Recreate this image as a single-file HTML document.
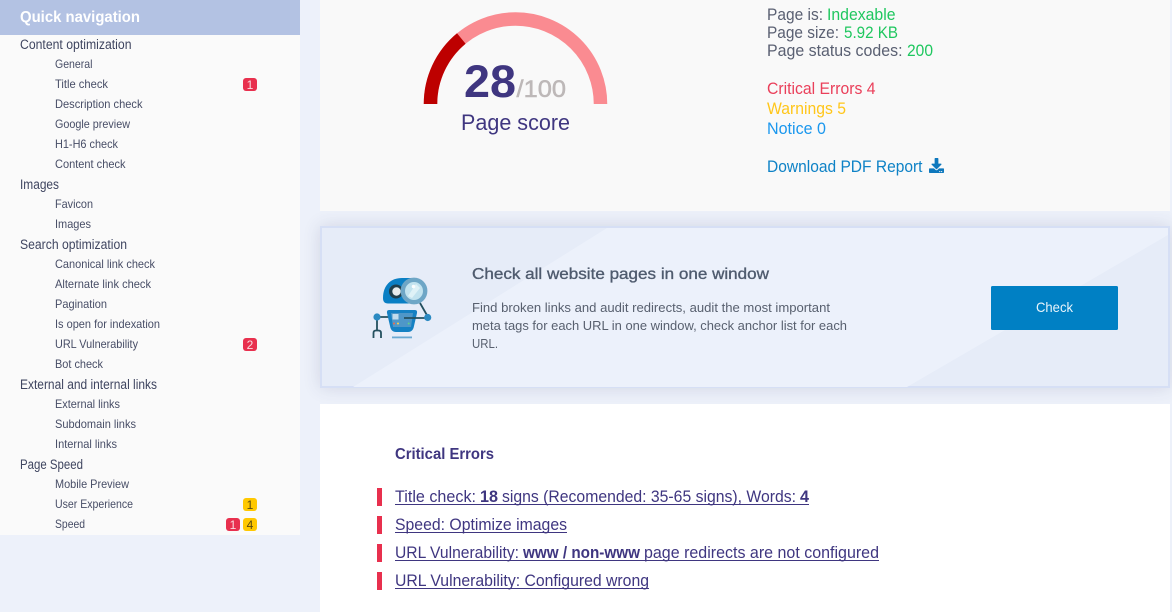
<!DOCTYPE html>
<html lang="en"><head><meta charset="utf-8"><title>Page score</title>
<style>
html,body{margin:0;padding:0;width:1172px;height:612px;overflow:hidden;background:#edf1fa}
.b{position:absolute}
svg{position:absolute;left:0;top:0;font-family:"Liberation Sans",sans-serif}
.g{font-size:13.5px;fill:#3f4560}
.s{font-size:12px;fill:#474d66}
.n{font-size:12px;text-anchor:middle}
.r{font-size:16.5px}
.l{font-size:16.5px;fill:#3f3680}
</style></head><body>
<div class="b" style="left:0;top:35px;width:300px;height:500px;background:#fafafa"></div>
<div class="b" style="left:0;top:0;width:300px;height:35px;background:#b3c2e3"></div>
<div class="b" style="left:320px;top:226px;width:846px;height:158px;border:2px solid #d6dff5;background:#e6ecf8;box-shadow:0 0 16px rgba(60,70,110,.16)"></div>
<div class="b" style="left:320px;top:0;width:850px;height:211px;background:#f9f9f9"></div>
<div class="b" style="left:320px;top:404px;width:850px;height:208px;background:#fff"></div>
<svg width="1172" height="612" viewBox="0 0 1172 612" xmlns="http://www.w3.org/2000/svg">
<polygon points="607,228 1168,228 1168,235 907,387 353,387" fill="#ecf1fb"/>
<!-- sidebar -->
<text x="20" y="22" font-size="16" font-weight="700" fill="#ffffff" textLength="120" lengthAdjust="spacingAndGlyphs">Quick navigation</text>
<text class="g" x="20" y="49" textLength="111.5" lengthAdjust="spacingAndGlyphs">Content optimization</text>
<text class="s" x="55" y="68" textLength="37.5" lengthAdjust="spacingAndGlyphs">General</text>
<text class="s" x="55" y="88" textLength="53" lengthAdjust="spacingAndGlyphs">Title check</text>
<text class="s" x="55" y="108" textLength="87.5" lengthAdjust="spacingAndGlyphs">Description check</text>
<text class="s" x="55" y="128" textLength="75" lengthAdjust="spacingAndGlyphs">Google preview</text>
<text class="s" x="55" y="148" textLength="63" lengthAdjust="spacingAndGlyphs">H1-H6 check</text>
<text class="s" x="55" y="168" textLength="70.5" lengthAdjust="spacingAndGlyphs">Content check</text>
<text class="g" x="20" y="189" textLength="39" lengthAdjust="spacingAndGlyphs">Images</text>
<text class="s" x="55" y="208" textLength="38" lengthAdjust="spacingAndGlyphs">Favicon</text>
<text class="s" x="55" y="228" textLength="36" lengthAdjust="spacingAndGlyphs">Images</text>
<text class="g" x="20" y="249" textLength="107" lengthAdjust="spacingAndGlyphs">Search optimization</text>
<text class="s" x="55" y="268" textLength="100" lengthAdjust="spacingAndGlyphs">Canonical link check</text>
<text class="s" x="55" y="288" textLength="96" lengthAdjust="spacingAndGlyphs">Alternate link check</text>
<text class="s" x="55" y="308" textLength="52" lengthAdjust="spacingAndGlyphs">Pagination</text>
<text class="s" x="55" y="328" textLength="105" lengthAdjust="spacingAndGlyphs">Is open for indexation</text>
<text class="s" x="55" y="348" textLength="83" lengthAdjust="spacingAndGlyphs">URL Vulnerability</text>
<text class="s" x="55" y="368" textLength="48" lengthAdjust="spacingAndGlyphs">Bot check</text>
<text class="g" x="20" y="389" textLength="137" lengthAdjust="spacingAndGlyphs">External and internal links</text>
<text class="s" x="55" y="408" textLength="65" lengthAdjust="spacingAndGlyphs">External links</text>
<text class="s" x="55" y="428" textLength="81" lengthAdjust="spacingAndGlyphs">Subdomain links</text>
<text class="s" x="55" y="448" textLength="62" lengthAdjust="spacingAndGlyphs">Internal links</text>
<text class="g" x="20" y="469" textLength="63" lengthAdjust="spacingAndGlyphs">Page Speed</text>
<text class="s" x="55" y="488" textLength="74" lengthAdjust="spacingAndGlyphs">Mobile Preview</text>
<text class="s" x="55" y="508" textLength="78" lengthAdjust="spacingAndGlyphs">User Experience</text>
<text class="s" x="55" y="528" textLength="30" lengthAdjust="spacingAndGlyphs">Speed</text>
<!-- badges -->
<rect x="243" y="78" width="14" height="13" rx="3" fill="#e8304e"/><text class="n" x="250" y="89" fill="#f9dbe0">1</text>
<rect x="243" y="338" width="14" height="13" rx="3" fill="#e8304e"/><text class="n" x="250" y="349" fill="#f9dbe0">2</text>
<rect x="243" y="498" width="14" height="13" rx="3" fill="#ffc800"/><text class="n" x="250" y="509" fill="#5b4a10">1</text>
<rect x="226" y="518" width="14" height="13" rx="3" fill="#e8304e"/><text class="n" x="233" y="529" fill="#f9dbe0">1</text>
<rect x="243" y="518" width="14" height="13" rx="3" fill="#ffc800"/><text class="n" x="250" y="529" fill="#5b4a10">4</text>
<!-- gauge -->
<path d="M430.500 104A85 85 0 0 1 600.500 104" fill="none" stroke="#fa8b91" stroke-width="13.500"/>
<path d="M430.500 104A85 85 0 0 1 461.300 38.500" fill="none" stroke="#bd0000" stroke-width="13.500"/>
<text x="464" y="97" font-size="45" font-weight="700" fill="#3f3680" textLength="52" lengthAdjust="spacingAndGlyphs">28</text>
<text x="516.500" y="97" font-size="24" fill="#bdb8b8" stroke="#bdb8b8" stroke-width=".5" textLength="49.500" lengthAdjust="spacingAndGlyphs">/100</text>
<text x="461" y="130" font-size="22.500" fill="#3f3680" textLength="109" lengthAdjust="spacingAndGlyphs">Page score</text>
<!-- status -->
<text class="r" x="767" y="20" fill="#5a6072" textLength="56" lengthAdjust="spacingAndGlyphs">Page is:</text>
<text class="r" x="827" y="20" fill="#1fc75f" textLength="68.500" lengthAdjust="spacingAndGlyphs">Indexable</text>
<text class="r" x="767" y="38" fill="#5a6072" textLength="72" lengthAdjust="spacingAndGlyphs">Page size:</text>
<text class="r" x="844" y="38" fill="#1fc75f" textLength="54" lengthAdjust="spacingAndGlyphs">5.92 KB</text>
<text class="r" x="767" y="56" fill="#5a6072" textLength="135.500" lengthAdjust="spacingAndGlyphs">Page status codes:</text>
<text class="r" x="907" y="56" fill="#1fc75f" textLength="26" lengthAdjust="spacingAndGlyphs">200</text>
<text class="r" x="767" y="94" fill="#ea3f5a" textLength="108.500" lengthAdjust="spacingAndGlyphs">Critical Errors 4</text>
<text class="r" x="767" y="114" fill="#ffc61a" textLength="79" lengthAdjust="spacingAndGlyphs">Warnings 5</text>
<text class="r" x="767" y="134" fill="#1a97ee" textLength="59" lengthAdjust="spacingAndGlyphs">Notice 0</text>
<text class="r" x="767" y="172" fill="#0e82c6" textLength="155.500" lengthAdjust="spacingAndGlyphs">Download PDF Report</text>
<g transform="translate(929 158) scale(.0293)"><path fill="#0e78bd" d="M216 0h80c13.300 0 24 10.700 24 24v168h87.700c17.800 0 26.700 21.500 14.100 34.100L269.700 378.300c-7.500 7.500-19.800 7.500-27.300 0L90.100 226.100c-12.600-12.600-3.700-34.100 14.100-34.100H192V24c0-13.300 10.700-24 24-24zm296 376v112c0 13.300-10.700 24-24 24H24c-13.300 0-24-10.700-24-24V376c0-13.300 10.700-24 24-24h146.700l49 49c20.100 20.100 52.500 20.100 72.600 0l49-49H488c13.300 0 24 10.700 24 24zm-124 88c0-11-9-20-20-20s-20 9-20 20 9 20 20 20 20-9 20-20zm64 0c0-11-9-20-20-20s-20 9-20 20 9 20 20 20 20-9 20-20z"/></g>
<!-- robot -->
<path d="M383 298C383 285 391 278 402 278L412 278L412 303.500L388 303.500Q383 303.500 383 298Z" fill="#0a7fc4"/>
<circle cx="396" cy="291.500" r="7" fill="#1f3f4c"/><circle cx="396.500" cy="291.500" r="4.200" fill="#e6ecec"/>
<path d="M420 303L428 317M377 317H389M377 320V330" stroke="#24505f" stroke-width="1.800" fill="none"/>
<circle cx="414" cy="291" r="11.200" fill="#c2e3ef" stroke="#6ea6c6" stroke-width="4.400"/>
<path d="M408 296L416 284L420 288L412 298Z" fill="#dff2f7"/>
<circle cx="413.500" cy="286.500" r="1.800" fill="#fafdfe"/>
<path d="M389 310H415Q417.500 310 417 313L414 326Q413 332 408 332H396Q391 332 390 326L387 313Q386.500 310 389 310Z" fill="#1581c3"/>
<path d="M391 313H413L411 327H393Z" fill="#4f97c8"/>
<rect x="392.500" y="314" width="6" height="5.500" fill="#c2dcec"/>
<path d="M404 318H427" stroke="#24505f" stroke-width="1.800"/>
<circle cx="394" cy="323.500" r="1" fill="#f06a4a"/><circle cx="398" cy="323.500" r="1" fill="#f7d34a"/><circle cx="408.700" cy="323.500" r="1" fill="#5fd08a"/>
<circle cx="427.700" cy="317.500" r="3.600" fill="#2b8ac2"/><circle cx="377" cy="317" r="3.600" fill="#2b8ac2"/>
<path d="M373.500 338V333Q373.500 330.500 376 330.500H378.500Q381 330.500 381 333V338" stroke="#24505f" stroke-width="1.800" fill="none"/>
<rect x="392" y="336.500" width="20" height="1.800" fill="#6aa9d2"/>
<!-- banner -->
<text x="472" y="279" font-size="16" fill="#4f5b6e" stroke="#4f5b6e" stroke-width=".35" textLength="297" lengthAdjust="spacingAndGlyphs">Check all website pages in one window</text>
<text x="472" y="312" font-size="13" fill="#58606f" textLength="358" lengthAdjust="spacingAndGlyphs">Find broken links and audit redirects, audit the most important</text>
<text x="472" y="330" font-size="13" fill="#58606f" textLength="375" lengthAdjust="spacingAndGlyphs">meta tags for each URL in one window, check anchor list for each</text>
<text x="472" y="348" font-size="13" fill="#58606f" textLength="26" lengthAdjust="spacingAndGlyphs">URL.</text>
<rect x="991" y="286" width="127" height="44" rx="1.500" fill="#0080c4"/>
<text x="1036" y="312" font-size="14" fill="#e8f4fb" textLength="37" lengthAdjust="spacingAndGlyphs">Check</text>
<!-- critical -->
<text x="395" y="459" font-size="15.500" font-weight="700" fill="#3f3680" textLength="99" lengthAdjust="spacingAndGlyphs">Critical Errors</text>
<rect x="377" y="488" width="5" height="18" fill="#e8304e"/><rect x="377" y="516" width="5" height="18" fill="#e8304e"/><rect x="377" y="544" width="5" height="18" fill="#e8304e"/><rect x="377" y="572" width="5" height="18" fill="#e8304e"/>
<text class="l" x="395" y="502" textLength="81" lengthAdjust="spacingAndGlyphs">Title check:</text>
<text class="l" x="480" y="502" font-weight="700" textLength="18" lengthAdjust="spacingAndGlyphs">18</text>
<text class="l" x="502" y="502" textLength="294" lengthAdjust="spacingAndGlyphs">signs (Recomended: 35-65 signs), Words:</text>
<text class="l" x="800" y="502" font-weight="700" textLength="9" lengthAdjust="spacingAndGlyphs">4</text>
<rect x="395" y="504" width="414" height="1" fill="#3f3680"/>
<text class="l" x="395" y="530" textLength="172" lengthAdjust="spacingAndGlyphs">Speed: Optimize images</text>
<rect x="395" y="532" width="172" height="1" fill="#3f3680"/>
<text class="l" x="395" y="558" textLength="124" lengthAdjust="spacingAndGlyphs">URL Vulnerability:</text>
<text class="l" x="523" y="558" font-weight="700" textLength="117" lengthAdjust="spacingAndGlyphs">www / non-www</text>
<text class="l" x="644" y="558" textLength="235" lengthAdjust="spacingAndGlyphs">page redirects are not configured</text>
<rect x="395" y="560" width="484" height="1" fill="#3f3680"/>
<text class="l" x="395" y="586" textLength="254" lengthAdjust="spacingAndGlyphs">URL Vulnerability: Configured wrong</text>
<rect x="395" y="588" width="254" height="1" fill="#3f3680"/>
</svg>
</body></html>
